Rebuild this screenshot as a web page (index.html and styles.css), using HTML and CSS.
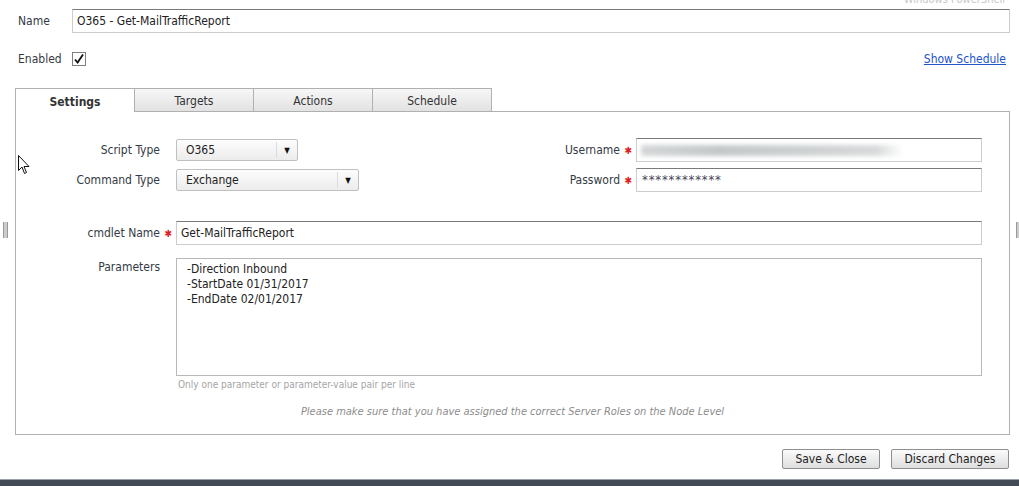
FILE: index.html
```html
<!doctype html>
<html>
	<head>
		<title>Edit Monitor</title>
		<link rel="stylesheet" href="styles.css">
	</head>
	<body>
		<div class="ghost-title">Windows PowerShell</div>

		<div class="row name-row">
			<label class="lead">Name</label>
			<div class="field">O365 - Get-MailTrafficReport</div>
		</div>

		<div class="row enabled-row">
			<label class="lead">Enabled</label>
			<span class="check">
				<svg width="12" height="12" viewBox="0 0 12 12"><path d="M2 6.5 L4.6 9.5 L10 1.5" fill="none" stroke="#111" stroke-width="1.8"/></svg>
			</span>
			<a href="#1" class="schedule-link">Show Schedule</a>
		</div>

		<div class="tabs">
			<div class="tab active">Settings</div>
			<div class="tab">Targets</div>
			<div class="tab">Actions</div>
			<div class="tab">Schedule</div>
			<div class="tab-rest"></div>
		</div>

		<div class="panel">
			<div class="pair">
				<div class="col-left">
					<div class="frow">
						<span class="flabel">Script Type<i class="star"></i></span>
						<div class="select short"><span>O365</span><b class="arrow">&#9660;</b></div>
					</div>
					<div class="frow">
						<span class="flabel">Command Type<i class="star"></i></span>
						<div class="select long"><span>Exchange</span><b class="arrow">&#9660;</b></div>
					</div>
				</div>
				<div class="col-right">
					<div class="frow">
						<span class="flabel">Username<i class="star">&#10033;</i></span>
						<div class="field small"><span class="blurred"></span></div>
					</div>
					<div class="frow">
						<span class="flabel">Password<i class="star">&#10033;</i></span>
						<div class="field small pw">************</div>
					</div>
				</div>
			</div>

			<div class="frow cmdlet">
				<span class="flabel">cmdlet Name<i class="star">&#10033;</i></span>
				<div class="field wide">Get-MailTrafficReport</div>
			</div>

			<div class="frow params">
				<span class="flabel">Parameters<i class="star"></i></span>
				<div class="textbox">
					<div class="area">-Direction Inbound<br>-StartDate 01/31/2017<br>-EndDate 02/01/2017</div>
					<div class="hint">Only one parameter or parameter-value pair per line</div>
				</div>
			</div>

			<div class="note">Please make sure that you have assigned the correct Server Roles on the Node Level</div>
		</div>

		<div class="buttons">
			<button class="save">Save &amp; Close</button>
			<button class="discard">Discard Changes</button>
		</div>

		<div class="footer"></div>

		<div class="grip left"></div>
		<div class="grip right"></div>
		<svg class="cursor" width="12" height="20" viewBox="0 0 12 20"><path d="M0.5 0.5 L0.5 15.5 L4 12 L6.5 18.5 L8.5 17.5 L6 11.5 L11 11.5 Z" fill="#fff" stroke="#111" stroke-width="1"/></svg>
	</body>
</html>
```

FILE: styles.css
```css
html, body {
	margin: 0;
	padding: 0;
}
body {
	width: 1019px;
	height: 486px;
	overflow: hidden;
	position: relative;
	background: #fff;
	font-family: "DejaVu Sans Condensed", "DejaVu Sans", sans-serif;
	font-size: 12px;
	color: #333b44;
}
.ghost-title {
	position: absolute;
	right: 14px;
	top: -7px;
	color: #c8c8c8;
	font-size: 11px;
}
.row {
	display: flex;
	align-items: center;
	padding-left: 18px;
}
.lead {
	width: 54px;
}
.name-row {
	padding-top: 9px;
	padding-right: 9px;
}
.field {
	flex: 1;
	box-sizing: border-box;
	height: 24px;
	line-height: 22px;
	border: 1px solid #cdcdcd;
	border-top-color: #7a7a7a;
	padding: 0 4px;
	color: #222;
	background: #fff;
}
.enabled-row {
	margin-top: 19px;
	padding-right: 13px;
}
.check {
	width: 12px;
	height: 12px;
	border: 1px solid #7f7f7f;
	display: flex;
	align-items: center;
	justify-content: center;
}
.schedule-link {
	margin-left: auto;
	color: #2255cc;
	font-size: 12px;
}

.tabs {
	display: flex;
	margin: 22px 9px 0 15px;
	height: 24px;
}
.tab {
	width: 119px;
	box-sizing: border-box;
	border: 1px solid #b0b0b0;
	border-left: none;
	background: linear-gradient(#f7f7f7, #e2e2e2);
	text-align: center;
	line-height: 24px;
	color: #333;
}
.tab.active {
	width: 120px;
	border-left: 1px solid #b0b0b0;
	border-bottom: none;
	background: #fff;
	font-weight: bold;
	line-height: 27px;
}
.tab-rest {
	flex: 1;
	border-bottom: 1px solid #b0b0b0;
}
.panel {
	margin: 0 9px 0 15px;
	height: 323px;
	box-sizing: border-box;
	border: 1px solid #b0b0b0;
	border-top: none;
	padding: 23px 27px 0 0;
}
.pair {
	display: flex;
}
.col-left {
	width: 485px;
}
.col-right {
	flex: 1;
}
.col-right .flabel {
	width: 137px;
}
.frow {
	display: flex;
	align-items: center;
	height: 30px;
}
.flabel {
	width: 156px;
	display: flex;
	justify-content: flex-end;
	align-items: center;
	margin-right: 4px;
	flex-shrink: 0;
}
.star {
	width: 12px;
	color: #e02020;
	font-style: normal;
	font-size: 10px;
	text-align: right;
	line-height: 12px;
	padding-top: 2px;
}
.select {
	height: 22px;
	box-sizing: border-box;
	border: 1px solid #c0c0c0;
	border-radius: 2px;
	background: linear-gradient(#fdfdfd, #ececec);
	display: flex;
	align-items: center;
	color: #222;
}
.select span {
	flex: 1;
	padding-left: 9px;
	border-right: 1px solid #dcdcdc;
	height: 16px;
	line-height: 16px;
}
.select .arrow {
	width: 20px;
	text-align: center;
	font-size: 8px;
	color: #111;
	font-weight: normal;
}
.select.short {
	width: 122px;
}
.select.long {
	width: 183px;
}
.field.small {
	flex: none;
	width: 346px;
}
.blurred {
	display: block;
	margin-top: 6px;
	height: 11px;
	width: 262px;
	background: linear-gradient(90deg, #d4d7d8, #c4c8c9 30%, #cdd0d1 60%, #d8dadb 90%, #fff);
	filter: blur(2px);
}
.pw {
	color: #445;
	font-size: 13px;
	letter-spacing: 0.8px;
	padding-left: 5px;
}
.cmdlet {
	margin-top: 23px;
}
.field.wide {
	flex: 1;
}
.params {
	align-items: flex-start;
	height: auto;
	margin-top: 10px;
}
.params .flabel {
	padding-top: 2px;
}
.textbox {
	flex: 1;
}
.area {
	height: 118px;
	box-sizing: border-box;
	border: 1px solid #b8b8b8;
	padding: 3px 10px;
	line-height: 15px;
	color: #222;
}
.hint {
	font-size: 10px;
	color: #a5a5a5;
	padding: 3px 2px 0;
}
.note {
	margin-top: 15px;
	padding-left: 27px;
	text-align: center;
	font-style: italic;
	color: #8c8c8c;
	font-size: 11px;
}

.buttons {
	display: flex;
	justify-content: flex-end;
	gap: 11px;
	margin: 14px 10px 0 0;
}
button {
	font-family: inherit;
	font-size: 12px;
	height: 20px;
	box-sizing: border-box;
	padding: 0;
	white-space: nowrap;
	border: 1px solid #8e8e8e;
	border-radius: 2px;
	background: linear-gradient(#fbfbfb, #dedede);
	color: #222;
}
.save {
	width: 98px;
}
.discard {
	width: 118px;
}
.footer {
	position: absolute;
	left: 0;
	right: 0;
	bottom: 0;
	height: 6px;
	background: #434b57;
	border-top: 1px solid #9aa0a8;
}
.grip {
	position: absolute;
	top: 222px;
	width: 1px;
	height: 16px;
	border-left: 1px solid #999;
	border-right: 1px solid #999;
	padding: 0 1px;
	background: #ccc;
}
.grip.left {
	left: 3px;
}
.grip.right {
	left: 1016px;
}
.cursor {
	position: absolute;
	left: 18px;
	top: 155px;
}
```
